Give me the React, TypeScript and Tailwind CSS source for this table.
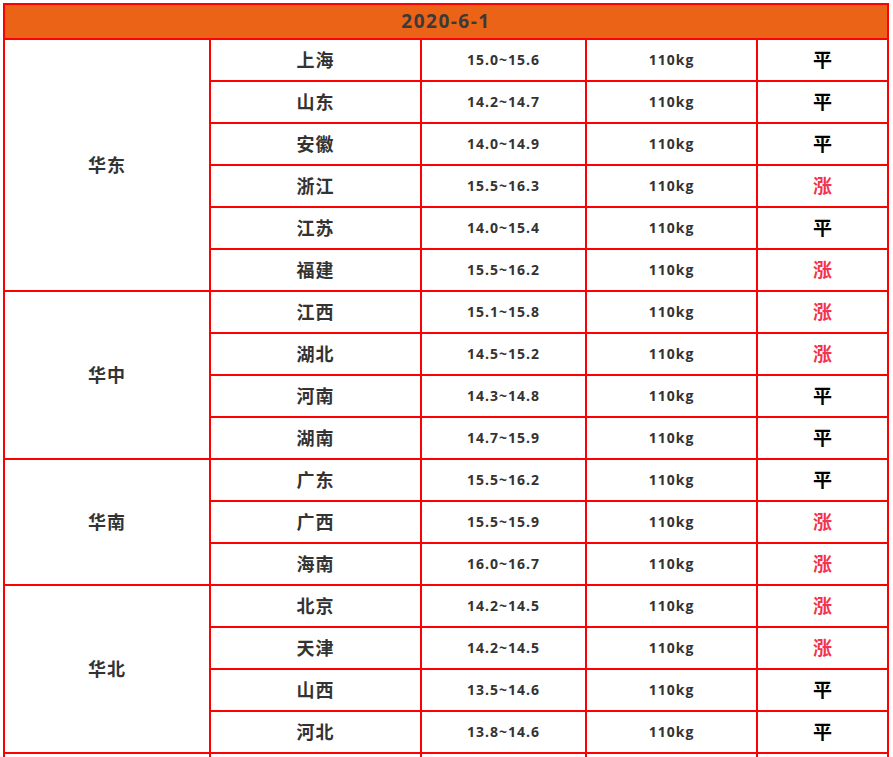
const groups: { region: string; rows: [string, string, string, '平' | '涨'][] }[] = [
  {
    region: '华东',
    rows: [
      ['上海', '15.0~15.6', '110kg', '平'],
      ['山东', '14.2~14.7', '110kg', '平'],
      ['安徽', '14.0~14.9', '110kg', '平'],
      ['浙江', '15.5~16.3', '110kg', '涨'],
      ['江苏', '14.0~15.4', '110kg', '平'],
      ['福建', '15.5~16.2', '110kg', '涨'],
    ],
  },
  {
    region: '华中',
    rows: [
      ['江西', '15.1~15.8', '110kg', '涨'],
      ['湖北', '14.5~15.2', '110kg', '涨'],
      ['河南', '14.3~14.8', '110kg', '平'],
      ['湖南', '14.7~15.9', '110kg', '平'],
    ],
  },
  {
    region: '华南',
    rows: [
      ['广东', '15.5~16.2', '110kg', '平'],
      ['广西', '15.5~15.9', '110kg', '涨'],
      ['海南', '16.0~16.7', '110kg', '涨'],
    ],
  },
  {
    region: '华北',
    rows: [
      ['北京', '14.2~14.5', '110kg', '涨'],
      ['天津', '14.2~14.5', '110kg', '涨'],
      ['山西', '13.5~14.6', '110kg', '平'],
      ['河北', '13.8~14.6', '110kg', '平'],
    ],
  },
]

const cell = 'border-2 border-[#ff0000] text-center align-middle'
const cjk = "font-['Noto_Sans_CJK_SC',sans-serif] font-bold"
const num = "font-['Open_Sans','Noto_Sans_CJK_SC',sans-serif] font-bold"

export default function App() {
  return (
    <div className="min-h-screen bg-white pl-[3px] pt-[3px]">
      <table className="w-[886px] table-fixed border-collapse text-[#333333]">
        <colgroup>
          <col className="w-[206px]" />
          <col className="w-[211px]" />
          <col className="w-[165px]" />
          <col className="w-[171px]" />
          <col className="w-[131px]" />
        </colgroup>
        <thead>
          <tr>
            <th
              colSpan={5}
              className={`${cell} ${num} h-[35px] bg-[#eb6317] p-0 text-[19px] tracking-[1.5px] text-[#3a3a3a]`}
            >
              2020-6-1
            </th>
          </tr>
        </thead>
        <tbody>
          {groups.map((g) =>
            g.rows.map(([prov, price, weight, trend], i) => (
              <tr key={g.region + prov}>
                {i === 0 && (
                  <td
                    rowSpan={g.rows.length}
                    className={`${cell} ${cjk} px-0 pt-0 pb-[2px] text-[18px] tracking-[1px]`}
                  >
                    {g.region}
                  </td>
                )}
                <td className={`${cell} ${cjk} h-[42px] px-0 pt-0 pb-[2px] text-[18px] tracking-[1px]`}>
                  {prov}
                </td>
                <td className={`${cell} ${num} px-0 pt-0 pb-[2px] text-[14px] tracking-[1px]`}>{price}</td>
                <td className={`${cell} ${num} px-0 pt-0 pb-[2px] text-[14px] tracking-[1px]`}>{weight}</td>
                <td
                  className={`${cell} ${cjk} px-0 pt-0 pb-[2px] text-[19px] ${trend === '涨' ? 'text-[#f5334c]' : 'text-black'}`}
                >
                  {trend}
                </td>
              </tr>
            )),
          )}
          <tr>
            <td className={`${cell} h-[8px] p-0`} />
            <td className={`${cell} p-0`} />
            <td className={`${cell} p-0`} />
            <td className={`${cell} p-0`} />
            <td className={`${cell} p-0`} />
          </tr>
        </tbody>
      </table>
    </div>
  )
}
